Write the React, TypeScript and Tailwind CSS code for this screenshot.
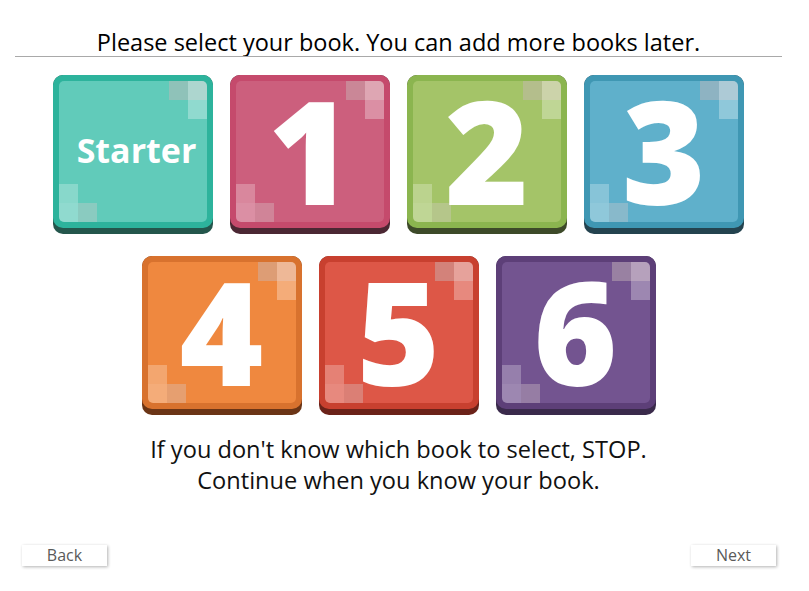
import React from "react";

type Book = {
    label: string;
    base: string;
    rim: string;
    face: string;
};

const topRow: Book[] = [
    { label: "Starter", base: "bg-[#24564c]", rim: "bg-[#2db39c]", face: "bg-[#61cbba]" },
    { label: "1", base: "bg-[#4b2733]", rim: "bg-[#c54a6c]", face: "bg-[#cc5f7d]" },
    { label: "2", base: "bg-[#3d4a29]", rim: "bg-[#8bb54f]", face: "bg-[#a4c468]" },
    { label: "3", base: "bg-[#24434f]", rim: "bg-[#3f97b3]", face: "bg-[#5fb0cb]" },
];

const bottomRow: Book[] = [
    { label: "4", base: "bg-[#6b3516]", rim: "bg-[#d8722e]", face: "bg-[#ef883f]" },
    { label: "5", base: "bg-[#6b2219]", rim: "bg-[#c8402f]", face: "bg-[#dd5747]" },
    { label: "6", base: "bg-[#3a2a4b]", rim: "bg-[#5d3f78]", face: "bg-[#735490]" },
];

const BookTile = ({ book }: { book: Book }) => {
    const isStarter = book.label === "Starter";
    return (
        <button className={`w-[160px] h-[159px] rounded-[10px] pb-[6px] cursor-pointer ${book.base}`}>
            <div className={`h-[153px] rounded-[10px] p-[6px] ${book.rim}`}>
                <div className={`relative h-full rounded-[5px] flex items-center justify-center ${book.face}`}>
                    {/* corner pixel squares */}
                    <span className="absolute top-0 right-[19px] w-[19px] h-[19px] bg-[#c8b8b8]/45" />
                    <span className="absolute top-0 right-0 w-[19px] h-[19px] rounded-tr-[5px] bg-[#ece0e0]/55" />
                    <span className="absolute top-[19px] right-0 w-[19px] h-[19px] bg-white/30" />
                    <span className="absolute bottom-[19px] left-0 w-[19px] h-[19px] bg-white/25" />
                    <span className="absolute bottom-0 left-0 w-[19px] h-[19px] rounded-bl-[5px] bg-white/30" />
                    <span className="absolute bottom-0 left-[19px] w-[19px] h-[19px] bg-[#d8cccc]/35" />
                    {isStarter ? (
                        <span className="relative ml-[7px] mb-[4px] text-white font-bold text-[34px] leading-none">
                            Starter
                        </span>
                    ) : (
                        <span className="relative mb-[4px] text-white font-extrabold text-[143px] leading-[120px]">
                            {book.label}
                        </span>
                    )}
                </div>
            </div>
        </button>
    );
};

export default function App() {
    return (
        <div className="w-[797px] h-[591px] bg-white flex flex-col font-['Open_Sans',sans-serif]">
            <h1 className="pt-[28px] text-center text-[23.5px] leading-[28px] text-black">
                Please select your book. You can add more books later.
            </h1>
            <div className="mx-[15px] h-px bg-[#a9a9a9]" />

            <div className="mt-[18px] flex justify-center gap-[17px]">
                {topRow.map((b) => (
                    <BookTile key={b.label} book={b} />
                ))}
            </div>
            <div className="mt-[22px] flex justify-center gap-[17px]">
                {bottomRow.map((b) => (
                    <BookTile key={b.label} book={b} />
                ))}
            </div>

            <p className="mt-[19px] text-center text-[23.6px] leading-[31px] text-[#111]">
                If you don't know which book to select, STOP.
                <br />
                Continue when you know your book.
            </p>

            <div className="mt-[49px] flex justify-between pl-[22px] pr-[21px]">
                <button className="w-[85px] h-[21px] bg-white text-[16px] leading-[21px] text-[#5a5a5a] shadow-[1px_1px_3px_rgba(0,0,0,0.3)]">
                    Back
                </button>
                <button className="w-[85px] h-[21px] bg-white text-[16px] leading-[21px] text-[#5a5a5a] shadow-[1px_1px_3px_rgba(0,0,0,0.3)]">
                    Next
                </button>
            </div>
        </div>
    );
}
